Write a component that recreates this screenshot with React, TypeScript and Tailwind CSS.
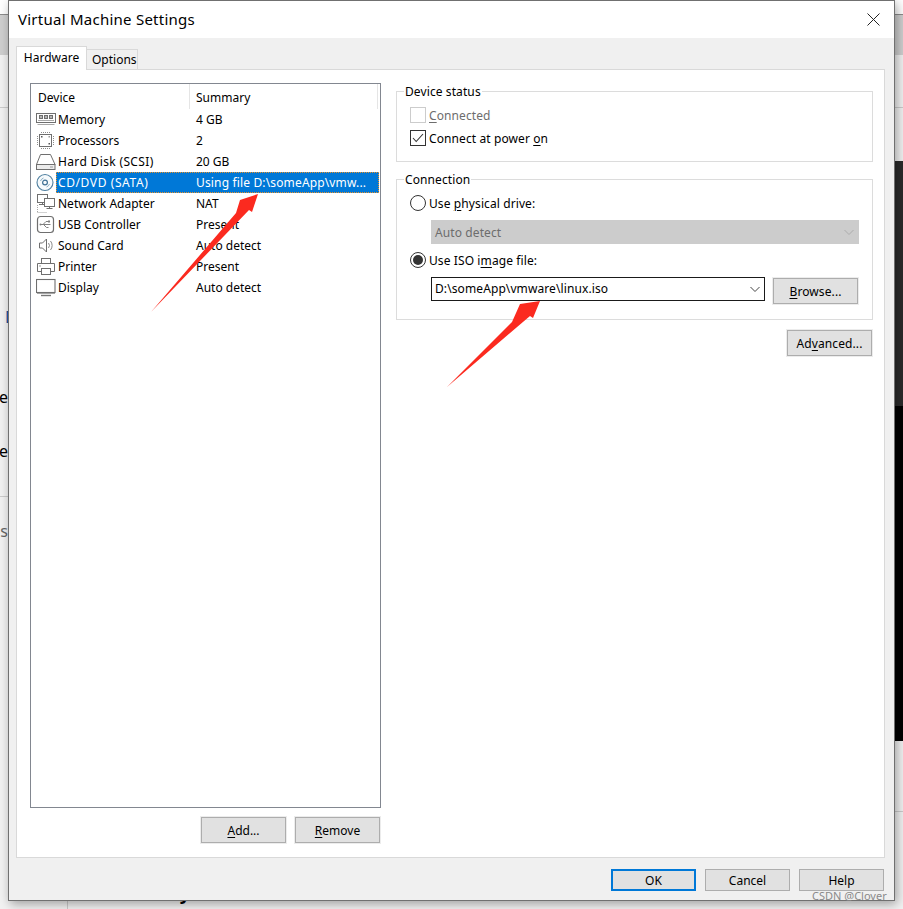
import React from "react";

const stroke = "#6f6f6f";

const MemoryIcon = () => (
  <svg width="20" height="21" viewBox="0 0 20 21" fill="none" stroke={stroke}>
    <rect x="0.5" y="4.5" width="19" height="9" />
    <rect x="3.5" y="6.5" width="3" height="3" fill="#b5b5b5" />
    <rect x="8.5" y="6.5" width="3" height="3" fill="#b5b5b5" />
    <rect x="13.5" y="6.5" width="3" height="3" fill="#b5b5b5" />
    <path d="M2 11.5h16M1.5 15.5h17" stroke="#a8a8a8" />
  </svg>
);
const CpuIcon = () => (
  <svg width="20" height="21" viewBox="0 0 20 21" fill="none" stroke={stroke}>
    <rect x="3.5" y="4.5" width="12" height="12" />
    <path d="M5 2.5h10M5 18.5h10M1.5 6v10M17.5 6v10" stroke="#8a8a8a" strokeDasharray="1 1" />
    <rect x="5" y="6" width="1.5" height="1.5" fill="#555" stroke="none" />
    <rect x="12.5" y="13" width="1.5" height="1.5" fill="#555" stroke="none" />
    <rect x="12.5" y="6" width="1.5" height="1.5" fill="#999" stroke="none" />
  </svg>
);
const DiskIcon = () => (
  <svg width="20" height="21" viewBox="0 0 20 21" fill="none" stroke={stroke}>
    <path d="M0.5 13.5 4.5 3.5h10l4.5 10" />
    <rect x="0.5" y="13.5" width="18.5" height="5" fill="#ececec" />
    <path d="M14 16h3" stroke="#999" />
  </svg>
);
const CdIcon = () => (
  <svg width="20" height="21" viewBox="0 0 20 21" fill="none">
    <circle cx="9" cy="10.5" r="8" stroke="#4f7f9f" strokeWidth="1.1" fill="#f6fafc" />
    <path d="M4.5 9a5 5 0 0 1 3-3" stroke="#8fb0c4" />
    <path d="M13.5 12a5 5 0 0 1-3 3" stroke="#8fb0c4" />
    <circle cx="9" cy="10.5" r="2.4" stroke="#3f7195" strokeWidth="1.2" />
  </svg>
);
const NetIcon = () => (
  <svg width="20" height="21" viewBox="0 0 20 21" fill="none" stroke={stroke}>
    <rect x="1.5" y="1.5" width="10" height="8" />
    <path d="M6.5 9.5v2M3 11.5h7" />
    <rect x="8.5" y="5.5" width="10" height="8" fill="#fff" />
    <path d="M13.5 13.5v2M10.5 15.5h6" />
    <path d="M1.5 12v8M1.5 19.5h10" stroke="#a5a5a5" strokeDasharray="1 1" />
  </svg>
);
const UsbIcon = () => (
  <svg width="20" height="21" viewBox="0 0 20 21" fill="none" stroke={stroke}>
    <rect x="1.5" y="2.5" width="16" height="16" rx="3" strokeWidth="1.2" />
    <path d="M4.5 10.5h10M7 10.5l3-3h2M7.5 10.5l3 3h2" stroke="#808080" />
    <rect x="12" y="6.5" width="2" height="2" fill="#808080" stroke="none" />
    <circle cx="4.5" cy="10.5" r="1" fill="#808080" stroke="none" />
  </svg>
);
const SoundIcon = () => (
  <svg width="20" height="21" viewBox="0 0 20 21" fill="none" stroke={stroke}>
    <path d="M3.5 8h3l4-4v13l-4-4h-3z" />
    <path d="M12.5 8a4 4 0 0 1 0 5M14.5 6a7 7 0 0 1 0 9" stroke="#8a8a8a" />
  </svg>
);
const PrinterIcon = () => (
  <svg width="20" height="21" viewBox="0 0 20 21" fill="none" stroke={stroke}>
    <rect x="5.5" y="2.5" width="9" height="5" />
    <path d="M5.5 15.5h-4v-8h17v8h-4" />
    <rect x="5.5" y="12.5" width="9" height="6" />
    <path d="M3 10h2" stroke="#999" />
  </svg>
);
const DisplayIcon = () => (
  <svg width="20" height="21" viewBox="0 0 20 21" fill="none" stroke={stroke}>
    <rect x="0.5" y="2.5" width="18.5" height="13" strokeWidth="1.1" />
    <path d="M1 16.5h18" stroke="#a5a5a5" />
    <path d="M5 18.5h10" stroke="#777" strokeWidth="1.4" />
  </svg>
);

const devices: {
  icon: React.ReactNode;
  name: string;
  summary: string;
  selected?: boolean;
  nameClass?: string;
  summaryClass?: string;
}[] = [
  { icon: <MemoryIcon />, name: "Memory", summary: "4 GB" },
  { icon: <CpuIcon />, name: "Processors", summary: "2" },
  { icon: <DiskIcon />, name: "Hard Disk (SCSI)", summary: "20 GB", nameClass: "tracking-[0.35px]" },
  {
    icon: <CdIcon />,
    name: "CD/DVD (SATA)",
    summary: "Using file D:\\someApp\\vmw...",
    selected: true,
    nameClass: "tracking-[0.6px]",
    summaryClass: "tracking-[0.15px]",
  },
  { icon: <NetIcon />, name: "Network Adapter", summary: "NAT" },
  { icon: <UsbIcon />, name: "USB Controller", summary: "Present" },
  { icon: <SoundIcon />, name: "Sound Card", summary: "Auto detect" },
  { icon: <PrinterIcon />, name: "Printer", summary: "Present" },
  { icon: <DisplayIcon />, name: "Display", summary: "Auto detect" },
];

const Btn = ({ children, className = "" }: { children: React.ReactNode; className?: string }) => (
  <div
    className={`w-[85px] h-[26px] pt-[2px] bg-[#e1e1e1] border border-[#adadad] shadow-[0_0_0_1px_#ececec] flex items-center justify-center ${className}`}
  >
    {children}
  </div>
);

const FootBtn = ({ children, primary }: { children: React.ReactNode; primary?: boolean }) => (
  <div
    className={
      primary
        ? "w-[85px] h-[22px] pt-[2px] bg-[#e1e1e1] border-2 border-[#0078d7] flex items-center justify-center"
        : "w-[85px] h-[22px] pt-[2px] bg-[#e1e1e1] border border-[#adadad] flex items-center justify-center"
    }
  >
    {children}
  </div>
);

const Chevron = ({ color }: { color: string }) => (
  <svg width="12" height="7" viewBox="0 0 12 7" fill="none" stroke={color}>
    <path d="M1.5 1 6 5.5 10.5 1" />
  </svg>
);

const Group = ({ title, className, children }: { title: string; className: string; children: React.ReactNode }) => (
  <div className={`relative w-[477px] border border-[#dcdcdc] pl-[13px] pt-[15px] ${className}`}>
    <span className="absolute left-[7px] -top-[9px] bg-white px-[1px] leading-[18px]">{title}</span>
    {children}
  </div>
);

const Radio = ({ on }: { on?: boolean }) => (
  <span className="w-[16px] h-[16px] rounded-full border border-[#333333] bg-white flex items-center justify-center shrink-0">
    {on && <span className="w-[10px] h-[10px] rounded-full bg-[#333333]" />}
  </span>
);

export default function App() {
  return (
    <div className="relative w-[903px] h-[909px] overflow-hidden bg-[#f2f2f2] font-['Noto_Sans',sans-serif] text-[12px] text-black">
      {/* desktop behind the dialog */}
      <div className="absolute left-0 top-0 w-full h-[14px] bg-white" />
      <div className="absolute left-0 top-[14px] w-full h-[41px] bg-[#cfcfcf] border-t border-[#8c8c8c]" />
      <div className="absolute left-0 top-[107px] w-full h-px bg-[#cccccc]" />
      <div className="absolute left-0 top-[496px] w-[9px] h-px bg-[#cccccc]" />
      <div className="absolute left-[890px] top-[161px] w-[13px] h-[245px] bg-[#2b2b2b]" />
      <div className="absolute left-[890px] top-[406px] w-[13px] h-[335px] bg-black" />
      <div className="absolute left-[890px] top-[811px] w-[13px] h-px bg-[#cccccc]" />
      <div className="absolute left-[67px] top-[895px] w-px h-[14px] bg-[#cccccc]" />
      <span className="absolute left-[5px] top-[306px] text-[16px] leading-[22px] text-[#1a4f9c]">D</span>
      <span className="absolute right-[895px] top-[386px] text-[16px] leading-[22px]">e</span>
      <span className="absolute right-[895px] top-[440px] text-[16px] leading-[22px]">e</span>
      <span className="absolute right-[895px] top-[520px] text-[16px] leading-[22px] text-[#666666]">s</span>
      <span className="absolute right-[713px] top-[881px] text-[18px] leading-[24px] font-bold">Memory</span>
      <span className="absolute left-[288px] top-[885px] text-[15px] leading-[20px] whitespace-nowrap">
        Host driver information is not available
      </span>

      {/* dialog window */}
      <div className="absolute left-[8px] top-0 w-[887px] h-[901px] border border-[#707070] bg-[#f0f0f0] shadow-[2px_3px_10px_rgba(0,0,0,0.35)] flex flex-col">
        <div className="h-[37px] bg-white flex items-center justify-between pl-[9px] pr-[14px] shrink-0">
          <span className="text-[15px] leading-[20px] tracking-[0.25px] pb-[2px]">Virtual Machine Settings</span>
          <svg width="13" height="13" viewBox="0 0 13 13" stroke="#222" fill="none">
            <path d="M.5.5l12 12M12.5.5l-12 12" />
          </svg>
        </div>

        <div className="flex-1 flex flex-col pl-[7px] pr-[9px]">
          <div className="h-[31px] flex items-end shrink-0">
            <div className="relative z-10 -mb-px h-[24px] w-[71px] bg-white border border-b-0 border-[#d9d9d9] flex items-center justify-center pb-[1px]">
              Hardware
            </div>
            <div className="h-[20px] w-[51px] bg-[#f0f0f0] border border-l-0 border-b-0 border-[#d9d9d9] flex items-center pl-[5px]">
              Options
            </div>
          </div>

          <div className="w-[869px] h-[789px] bg-white border border-[#d9d9d9] flex pl-[13px] pt-[13px] shrink-0">
            {/* device list */}
            <div className="w-[351px] flex flex-col shrink-0">
              <div className="h-[725px] border border-[#828790] flex flex-col pr-px">
                <div className="h-[25px] flex items-center shrink-0">
                  <div className="w-[159px] h-full pl-[7px] border-r border-[#e5e5e5] flex items-center pt-[2px]">Device</div>
                  <div className="flex-1 h-full pl-[6px] border-r border-[#e5e5e5] mr-px flex items-center pt-[2px]">Summary</div>
                </div>
                {devices.map((d) => (
                  <div key={d.name} className="h-[21px] flex items-center pl-[5px] shrink-0">
                    <div className="w-[20px] h-[21px] shrink-0">{d.icon}</div>
                    <div
                      className={
                        d.selected
                          ? "flex-1 h-[21px] flex items-center bg-[#0078d7] text-white outline outline-1 -outline-offset-1 outline-dotted outline-[#e8932c]"
                          : "flex-1 h-[21px] flex items-center"
                      }
                    >
                      <span className={`w-[140px] pl-[2px] shrink-0 ${d.nameClass ?? ""}`}>{d.name}</span>
                      <span className={`whitespace-nowrap ${d.summaryClass ?? ""}`}>{d.summary}</span>
                    </div>
                  </div>
                ))}
              </div>
              <div className="flex justify-end gap-[9px] mt-[9px] mr-px">
                <Btn>
                  <span>
                    <u className="underline-offset-2">A</u>dd...
                  </span>
                </Btn>
                <Btn>
                  <span>
                    <u className="underline-offset-2">R</u>emove
                  </span>
                </Btn>
              </div>
            </div>

            {/* device settings */}
            <div className="ml-[15px] w-[477px] pt-[8px] flex flex-col tracking-[0.1px]">
              <Group title="Device status" className="h-[71px]">
                <div className="flex items-center h-[16px]">
                  <span className="w-[16px] h-[16px] border border-[#cccccc] bg-white shrink-0" />
                  <span className="ml-[3px] pt-[2px] text-[#6d6d6d]">
                    <u className="underline-offset-2">C</u>onnected
                  </span>
                </div>
                <div className="flex items-center h-[16px] mt-[7px]">
                  <span className="w-[16px] h-[16px] border border-[#333333] bg-white shrink-0 flex items-center justify-center">
                    <svg width="12" height="10" viewBox="0 0 12 10" fill="none" stroke="#333" strokeWidth="1.1">
                      <path d="M1 5l3.2 3.5L11 1" />
                    </svg>
                  </span>
                  <span className="ml-[3px] pt-[2px]">
                    Connect at power <u className="underline-offset-2">o</u>n
                  </span>
                </div>
              </Group>

              <Group title="Connection" className="h-[141px] mt-[17px]">
                <div className="flex items-center h-[16px]">
                  <Radio />
                  <span className="ml-[3px] pt-[2px]">
                    Use <u className="underline-offset-2">p</u>hysical drive:
                  </span>
                </div>
                <div className="ml-[21px] mt-[9px] w-[428px] h-[24px] bg-[#cccccc] flex items-center justify-between pl-[4px] pr-[4px] text-[#6d6d6d]">
                  <span className="pt-[2px]">Auto detect</span>
                  <Chevron color="#adadad" />
                </div>
                <div className="flex items-center h-[16px] mt-[8px]">
                  <Radio on />
                  <span className="ml-[3px] pt-[2px]">
                    Use ISO i<u className="underline-offset-2">m</u>age file:
                  </span>
                </div>
                <div className="flex mt-[9px] ml-[21px]">
                  <div className="w-[334px] h-[24px] border border-[#1a1a1a] bg-white flex items-center justify-between pl-[3px] pr-[3px]">
                    <span>D:\someApp\vmware\linux.iso</span>
                    <Chevron color="#444444" />
                  </div>
                  <Btn className="ml-[8px] mt-px">
                    <span>
                      <u className="underline-offset-2">B</u>rowse...
                    </span>
                  </Btn>
                </div>
              </Group>

              <Btn className="self-end mr-px mt-[10px]">
                <span>
                  Ad<u className="underline-offset-2">v</u>anced...
                </span>
              </Btn>
            </div>
          </div>

          <div className="flex justify-end gap-[9px] mt-[11px] mr-px">
            <FootBtn primary>OK</FootBtn>
            <FootBtn>Cancel</FootBtn>
            <FootBtn>Help</FootBtn>
          </div>
        </div>
      </div>

      {/* annotations over the screenshot */}
      <svg className="absolute left-0 top-0 pointer-events-none" width="903" height="909" viewBox="0 0 903 909">
        <polygon points="151,312 236,213 240,200 258,194 252,212 249,210" fill="#fb2a1f" />
        <polygon points="447,387 512,322 520,304 540,301 533,318 530,316" fill="#fb2a1f" />
      </svg>
      <span className="absolute left-[812px] top-[888px] text-[11px] leading-[15px] text-[#8a8a8a] whitespace-nowrap">
        CSDN @Clover
      </span>
    </div>
  );
}
